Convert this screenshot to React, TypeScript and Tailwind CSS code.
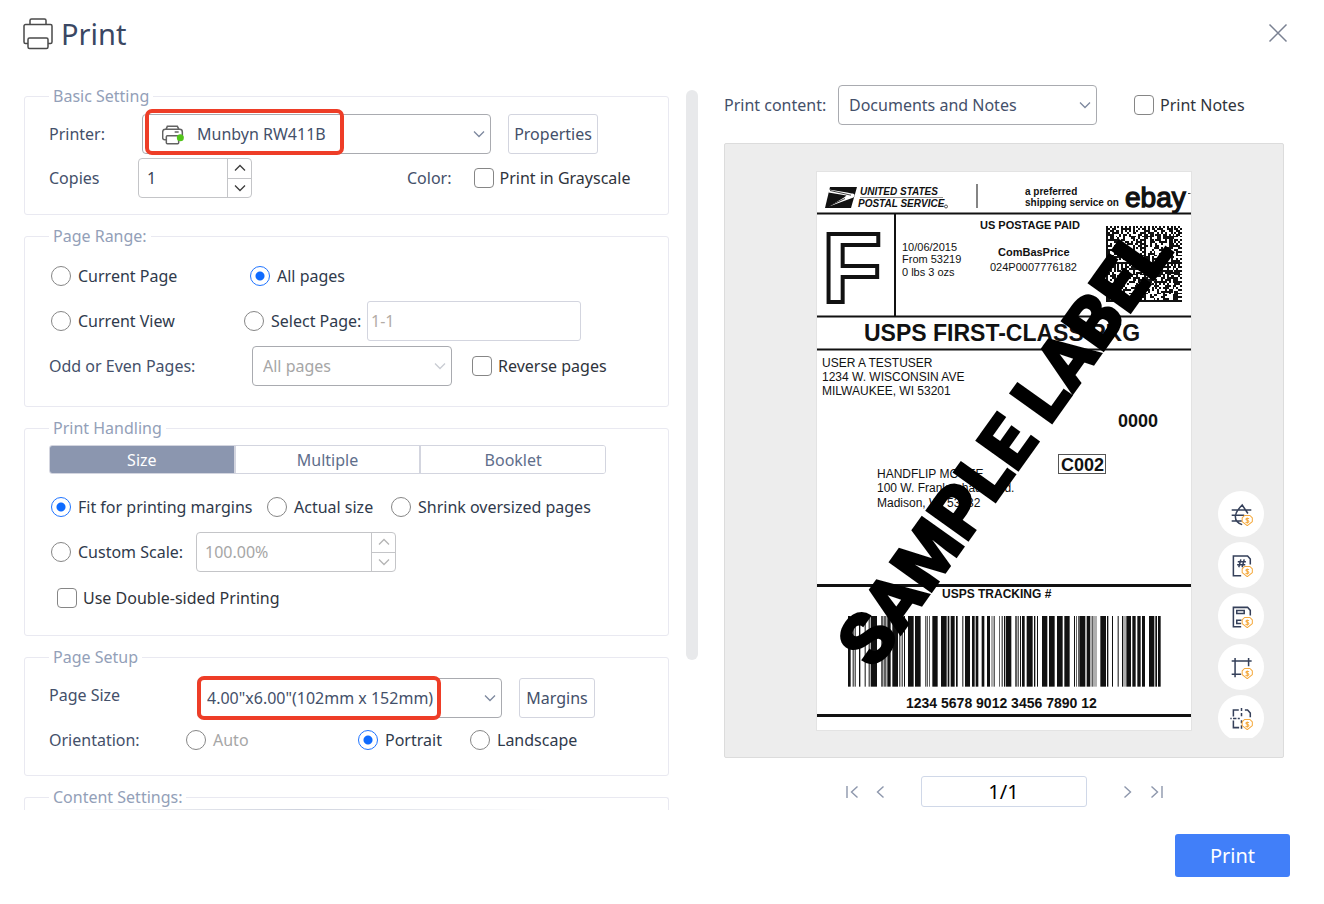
import React, { useState } from "react";
import type { ReactNode } from "react";

const BARS: [number, number][] = [
  [114, 8], [128, 3], [134, 3], [147, 4], [164, 3], [176, 3], [182, 19], [214, 4], [221, 3], [226, 3], [232, 10],
  [247, 17], [268, 3], [275, 3], [282, 3], [294, 17], [315, 17], [346, 3], [352, 2], [358, 2], [367, 16], [393, 17],
  [413, 5], [422, 12], [438, 5], [457, 3], [465, 15], [486, 8], [497, 8], [515, 8], [531, 9], [545, 2], [551, 3],
  [567, 2], [575, 3], [582, 3], [587, 17], [616, 4], [623, 3], [630, 3], [636, 8], [650, 18], [672, 4], [681, 3],
  [696, 16], [717, 17], [741, 17], [763, 16], [792, 3], [799, 2], [804, 2], [808, 18], [830, 11], [845, 3],
  [851, 2], [857, 2], [871, 17], [891, 4], [906, 3], [923, 3], [936, 4], [944, 2], [949, 14], [967, 10],
  [982, 10], [996, 9], [1017, 16], [1036, 5], [1044, 8],
];

const MATRIX_SIZE = 40;

function matrixPath(): string {
  let seed = 53219;
  let d = "";
  for (let y = 0; y < MATRIX_SIZE; y++) {
    for (let x = 0; x < MATRIX_SIZE; x++) {
      seed = (seed * 1103515245 + 12345) % 2147483648;
      const qx = x % 20;
      const qy = y % 20;
      let on = seed / 2147483648 > 0.46;
      if (qy === 0) on = x % 2 === 0;
      if (qx === 19) on = y % 2 === 1;
      if (qx === 0 || qy === 19) on = true;
      if (on) d += `M${x} ${y}h1v1h-1z`;
    }
  }
  return d;
}

function Chevron({ dir, className }: { dir: "up" | "down"; className: string }) {
  return (
    <svg viewBox="0 0 12 8" fill="none" stroke="currentColor" className={className} aria-hidden="true">
      <path d={dir === "down" ? "M1 1.5 6 6.5 11 1.5" : "M1 6.5 6 1.5 11 6.5"} strokeWidth="1.3" />
    </svg>
  );
}

function Group({ title, className, children }: { title: string; className: string; children?: ReactNode }) {
  return (
    <fieldset className={`min-w-0 rounded-[3px] border border-[#e9e9f1] px-6 ${className}`}>
      <legend className="px-1 leading-6 text-[#93a0b8]">{title}</legend>
      {children}
    </fieldset>
  );
}

function Radio({
  name,
  label,
  checked,
  disabled,
  onSelect,
}: {
  name: string;
  label: string;
  checked: boolean;
  disabled?: boolean;
  onSelect: () => void;
}) {
  return (
    <label className={`flex items-center gap-[7px] whitespace-nowrap ${disabled ? "text-[#a6a6a6]" : "text-[#2f3a4c]"}`}>
      <input
        type="radio"
        name={name}
        checked={checked}
        disabled={disabled}
        onChange={onSelect}
        className="size-5 shrink-0 appearance-none rounded-full border border-[#868686] bg-white checked:border-[#1f74ff] checked:bg-[radial-gradient(circle,#0f6bff_4px,transparent_5px)]"
      />
      {label}
    </label>
  );
}

function Check({ label }: { label: string }) {
  return (
    <label className="flex items-center gap-1.5 whitespace-nowrap text-[#2f343c]">
      <input
        type="checkbox"
        className="size-5 shrink-0 appearance-none rounded-[4px] border border-[#868686] bg-white checked:bg-[#1f74ff]"
      />
      {label}
    </label>
  );
}

function Drop({
  id,
  options,
  className,
  pad,
  disabled,
  children,
}: {
  id: string;
  options: string[];
  className: string;
  pad: string;
  disabled?: boolean;
  children?: ReactNode;
}) {
  return (
    <div className={`relative h-10 shrink-0 ${className}`}>
      <select
        id={id}
        disabled={disabled}
        className={`size-full appearance-none rounded-[4px] border border-[#a9abb0] bg-white pr-8 ${pad} ${disabled ? "text-[#a6a6a6] opacity-100" : "text-[#44506a]"}`}
      >
        {options.map((o) => (
          <option key={o}>{o}</option>
        ))}
      </select>
      <Chevron
        dir="down"
        className={`pointer-events-none absolute top-4 right-1.5 h-2 w-3 ${disabled ? "text-[#c9ccd3]" : "text-[#7d889e]"}`}
      />
      {children}
    </div>
  );
}

function Stepper({ label, id, value, className, disabled }: { label?: string; id?: string; value: string; className: string; disabled?: boolean }) {
  const tone = disabled ? "text-[#b4b4b4]" : "text-[#3c3c3c]";
  return (
    <div className={`flex h-10 shrink-0 overflow-hidden rounded-[4px] border border-[#c4c5c8] bg-white ${className}`}>
      <input
        id={id}
        aria-label={label}
        defaultValue={value}
        disabled={disabled}
        className={`min-w-0 flex-1 px-2 ${disabled ? "text-[#a6a6a6]" : "text-[#3a4456]"}`}
      />
      <div className={`flex w-6 flex-col border-l border-[#c4c5c8] ${tone}`}>
        <button type="button" aria-label="Increase" disabled={disabled} className="flex flex-1 items-center justify-center border-b border-[#c4c5c8]">
          <Chevron dir="up" className="h-2 w-3" />
        </button>
        <button type="button" aria-label="Decrease" disabled={disabled} className="flex flex-1 items-center justify-center">
          <Chevron dir="down" className="h-2 w-3" />
        </button>
      </div>
    </div>
  );
}

function ShippingLabel() {
  return (
    <svg
      viewBox="0 0 374 558"
      className="w-[374px] max-w-full bg-white outline outline-[#e3e3e3]"
      fontFamily="'Liberation Sans', Arial, sans-serif"
      fill="#111"
      role="img"
      aria-label="Shipping label preview"
    >
      <g>
        <path d="M13 15H40L34 36H8z" />
        <path d="M12 17.500 30 20.500 34.500 21.500C37.500 21.500 38.500 23 36.500 25.500L12 34.500 27 25.500 29.500 23.500 11.500 20.500z" fill="#fff" />
        <path d="M13 18.500 30 22.300 34 23.200M28 26.500 10 35" fill="none" stroke="#111" strokeWidth="0.800" />
      </g>
      <g fontWeight="700" fontStyle="italic">
        <text x="43" y="23" fontSize="10">UNITED STATES</text>
        <text x="41" y="35" fontSize="10">POSTAL SERVICE</text>
      </g>
      <circle cx="129" cy="34.500" r="1.500" fill="none" stroke="#111" strokeWidth="0.700" />
      <path d="M43 25.500H126" stroke="#777" strokeWidth="0.800" />
      <path d="M160 12V36" stroke="#333" strokeWidth="1.200" />
      <g fontWeight="700" fontSize="10">
        <text x="208" y="23">a preferred</text>
        <text x="208" y="34">shipping service on</text>
      </g>
      <text x="308" y="35" fontSize="28" stroke="#111" strokeWidth="1.300">ebay</text>
      <path d="M371 21.500h2.500" stroke="#444" />
      <path d="M0 41.500H374M0 144.500H374M0 177.500H374M78 41V145" stroke="#111" strokeWidth="2" />
      <text x="5" y="130" fontSize="98" fontWeight="700" fill="#fff" stroke="#111" strokeWidth="4">F</text>
      <g fontSize="11">
        <text x="85" y="79">10/06/2015</text>
        <text x="85" y="91">From 53219</text>
        <text x="85" y="104">0 lbs 3 ozs</text>
        <text x="173" y="99">024P0007776182</text>
      </g>
      <g fontSize="11" fontWeight="700">
        <text x="163" y="57">US POSTAGE PAID</text>
        <text x="181" y="84">ComBasPrice</text>
      </g>
      <g transform="translate(289 54) scale(1.9)">
        <path d={matrixPath()} shapeRendering="crispEdges" />
      </g>
      <text x="47" y="169" fontSize="23" fontWeight="700">USPS FIRST-CLASS PKG</text>
      <g fontSize="12">
        <text x="5" y="195">USER A TESTUSER</text>
        <text x="5" y="209">1234 W. WISCONSIN AVE</text>
        <text x="5" y="223">MILWAUKEE, WI 53201</text>
        <text x="60" y="306">HANDFLIP MCGEE</text>
        <text x="60" y="320">100 W. Frankenhauer Rd.</text>
        <text x="60" y="335">Madison, WI 53232</text>
      </g>
      <g fontSize="18" fontWeight="700">
        <text x="301" y="255">0000</text>
        <text x="244" y="299">C002</text>
      </g>
      <rect x="241.500" y="282.500" width="47" height="19" fill="none" stroke="#555" />
      <path d="M0 413.500H374M0 543.500H374" stroke="#111" strokeWidth="3" />
      <text x="125" y="426" fontSize="12" fontWeight="700">USPS TRACKING #</text>
      <g transform="translate(-7 444) scale(0.33333)">
        {BARS.map(([x, w]) => (
          <rect key={x} x={x} y="0" width={w} height="212" />
        ))}
      </g>
      <text x="89" y="536" fontSize="14" fontWeight="700">1234 5678 9012 3456 7890 12</text>
      <text
        transform="translate(187 270) rotate(-54.5)"
        x="-4"
        y="28"
        textAnchor="middle"
        fontFamily="Roboto, 'Liberation Sans', sans-serif"
        fontSize="72"
        fontWeight="900"
        fill="#000"
        stroke="#000"
        strokeWidth="2"
      >
        SAMPLE LABEL
      </text>
    </svg>
  );
}

const TOOLS: { label: string; art: ReactNode }[] = [
  {
    label: "Watermark",
    art: <path d="M5 21H63M5 36H42M5 53H35M53 31 36 6C28 14 17 26 16 38 15 50 23 60 36 64" />,
  },
  {
    label: "Page number",
    art: (
      <>
        <path d="M33 64H10V6H52L60 15V31" />
        <path d="M32 16 26 39M42 16 36 39M23 23H47M21 32H45" />
      </>
    ),
  },
  {
    label: "Header and footer",
    art: <path d="M33 64H10V7H52L60 16V31M20 16H42V25H20ZM34 45H20V55H33" />,
  },
  {
    label: "Crop",
    art: <path d="M5 15H64M15 6V63M5 54H33M55 6V30" />,
  },
  {
    label: "Split pages",
    art: <path d="M26 9H10V28M10 40V61H27M1 34H5M9 34H19M23 34H29M34 3V12M34 18V27M34 39V48M34 54V64M44 9H52L60 18V30" />,
  },
];

function ToolIcon({ children }: { children: ReactNode }) {
  return (
    <svg viewBox="0 0 68 68" className="size-[23px]" fill="none" stroke="#35405a" strokeWidth="4.5" aria-hidden="true">
      {children}
      <g stroke="#f5a93c" strokeWidth="3" strokeLinejoin="round">
        <path d="M43 37H59L66 44V55L51 67 36 55V44Z" fill="#fff" />
        <path d="M56 47C54 44 47 44 47 48 47 52 56 50 56 55 56 59 48 59 46 56M51 43V61" />
      </g>
    </svg>
  );
}

export default function App() {
  const [range, setRange] = useState("All pages");
  const [fit, setFit] = useState("Fit for printing margins");
  const [orientation, setOrientation] = useState("Portrait");
  const [tab, setTab] = useState("Size");

  return (
    <div className="bg-white pb-6 font-['Noto_Sans','Open_Sans',sans-serif] text-base text-[#44506a]">
      <header className="flex h-[84px] items-start justify-between pt-3 pr-9 pl-[23px]">
        <div className="flex items-center gap-2">
          <svg viewBox="0 0 30 32" className="h-8 w-[30px]" fill="none" stroke="#4a4a4a" strokeWidth="1.5" aria-hidden="true">
            <path d="M7 6.500V2.500A1.500 1.500 0 0 1 8.500 1H21.500A1.500 1.500 0 0 1 23 2.500V6.500" />
            <path d="M5 25.500H2.500A1.500 1.500 0 0 1 1 24V8A1.500 1.500 0 0 1 2.500 6.500H27.500A1.500 1.500 0 0 1 29 8V24A1.500 1.500 0 0 1 27.500 25.500H25" />
            <rect x="5" y="20" width="20" height="10.500" rx="1.500" />
          </svg>
          <h1 className="text-[29px] leading-[44px] text-[#3a4763]">Print</h1>
        </div>
        <button type="button" aria-label="Close" className="mt-[11px] text-[#7a8192]">
          <svg viewBox="0 0 20 20" className="size-5" fill="none" stroke="currentColor" strokeWidth="1.5" aria-hidden="true">
            <path d="M1.500 1.500 18.500 18.500M18.500 1.500 1.500 18.500" />
          </svg>
        </button>
      </header>

      <main className="grid grid-cols-[minmax(0,674fr)_minmax(0,560fr)] gap-[26px] pr-10 pl-6">
        <div className="flex items-start gap-[17px]">
          <form className="flex min-w-0 flex-1 flex-col gap-[9px]">
            <Group title="Basic Setting" className="pb-4">
              <div className="mt-1.5 flex items-center">
                <label htmlFor="printer" className="w-[93px]">Printer:</label>
                <Drop id="printer" options={["Munbyn RW411B"]} className="w-[349px]" pad="pl-[54px]">
                  <svg viewBox="0 0 66 60" className="pointer-events-none absolute top-[11px] left-5 h-5 w-[22px]" fill="none" stroke="#626262" strokeWidth="4.5" aria-hidden="true">
                    <path d="M12 13 16 4H46L51 13M14 44H8Q2 44 2 38V21Q2 13 10 13H53Q61 13 61 21V38" />
                    <rect x="13" y="32" width="37" height="24" rx="3" />
                    <path d="M38 21H50" />
                    <circle cx="55" cy="38" r="10.500" fill="#52c41a" stroke="none" />
                  </svg>
                  <span className="pointer-events-none absolute -top-[5px] left-[3px] h-[46px] w-[199px] rounded-[7px] border-4 border-[#ee3d27]" />
                </Drop>
                <button type="button" className="ml-[17px] h-10 w-[90px] rounded-[3px] border border-[#d3d5df]">Properties</button>
              </div>
              <div className="mt-1 flex items-center">
                <label htmlFor="copies" className="w-[89px]">Copies</label>
                <Stepper id="copies" value="1" className="w-[114px]" />
                <span className="mr-[22px] ml-[155px]">Color:</span>
                <Check label="Print in Grayscale" />
              </div>
            </Group>

            <Group title="Page Range:" className="pb-5">
              <div className="mt-2 flex h-10 items-center pl-0.5">
                <div className="w-[199px]">
                  <Radio name="range" label="Current Page" checked={range === "Current Page"} onSelect={() => setRange("Current Page")} />
                </div>
                <Radio name="range" label="All pages" checked={range === "All pages"} onSelect={() => setRange("All pages")} />
              </div>
              <div className="mt-[5px] flex h-10 items-center pl-0.5">
                <div className="w-[193px]">
                  <Radio name="range" label="Current View" checked={range === "Current View"} onSelect={() => setRange("Current View")} />
                </div>
                <div className="w-[123px]">
                  <Radio name="range" label="Select Page:" checked={range === "Select Page"} onSelect={() => setRange("Select Page")} />
                </div>
                <input aria-label="Pages to print" placeholder="1-1" className="h-10 w-[214px] rounded-[3px] border border-[#d3d5df] px-[3px] placeholder:text-[#b3aca6]" />
              </div>
              <div className="mt-[5px] flex items-center">
                <label htmlFor="parity" className="w-[203px]">Odd or Even Pages:</label>
                <Drop id="parity" options={["All pages"]} className="mr-5 w-[200px]" pad="pl-2.5" disabled />
                <Check label="Reverse pages" />
              </div>
            </Group>

            <Group title="Print Handling" className="pb-[17px]">
              <div role="tablist" className="mt-[5px] mr-[38px] flex h-[29px] overflow-hidden rounded-[3px] border border-[#d3d5df]">
                {["Size", "Multiple", "Booklet"].map((t) => (
                  <button
                    key={t}
                    type="button"
                    role="tab"
                    aria-selected={tab === t}
                    onClick={() => setTab(t)}
                    className={`flex-1 border-r-2 border-[#d3d5df] leading-7 last:border-r-0 ${tab === t ? "bg-[#8b96af] text-white" : "bg-white text-[#606e8b]"}`}
                  >
                    {t}
                  </button>
                ))}
              </div>
              <div className="mt-[13px] flex h-10 items-center pl-0.5">
                <div className="w-[216px]">
                  <Radio name="fit" label="Fit for printing margins" checked={fit === "Fit for printing margins"} onSelect={() => setFit("Fit for printing margins")} />
                </div>
                <div className="w-[124px]">
                  <Radio name="fit" label="Actual size" checked={fit === "Actual size"} onSelect={() => setFit("Actual size")} />
                </div>
                <Radio name="fit" label="Shrink oversized pages" checked={fit === "Shrink"} onSelect={() => setFit("Shrink")} />
              </div>
              <div className="mt-[5px] flex h-10 items-center pl-0.5">
                <div className="w-[145px]">
                  <Radio name="fit" label="Custom Scale:" checked={fit === "Custom"} onSelect={() => setFit("Custom")} />
                </div>
                <Stepper label="Scale percentage" value="100.00%" className="w-[200px]" disabled />
              </div>
              <div className="mt-1.5 flex h-10 items-center pl-2">
                <Check label="Use Double-sided Printing" />
              </div>
            </Group>

            <Group title="Page Setup" className="pb-[15px]">
              <div className="mt-[9px] flex items-center">
                <label htmlFor="size" className="w-[148px] pb-1.5">Page Size</label>
                <Drop id="size" options={['4.00"x6.00"(102mm x 152mm)']} className="w-[305px]" pad="pl-[9px]">
                  <span className="pointer-events-none absolute -top-0.5 left-0 h-[44px] w-[244px] rounded-[7px] border-4 border-[#ee3d27]" />
                </Drop>
                <button type="button" className="ml-[17px] h-10 w-[76px] rounded-[3px] border border-[#d3d5df]">Margins</button>
              </div>
              <div className="mt-0.5 flex h-10 items-center">
                <span className="w-[137px]">Orientation:</span>
                <div className="w-[172px]">
                  <Radio name="orientation" label="Auto" checked={false} disabled onSelect={() => setOrientation("Auto")} />
                </div>
                <div className="w-[112px]">
                  <Radio name="orientation" label="Portrait" checked={orientation === "Portrait"} onSelect={() => setOrientation("Portrait")} />
                </div>
                <Radio name="orientation" label="Landscape" checked={orientation === "Landscape"} onSelect={() => setOrientation("Landscape")} />
              </div>
            </Group>

            <Group title="Content Settings:" className="rounded-b-none border-b-0">
              <div className="mr-24 h-px bg-linear-to-r from-transparent via-[#cfd3de] to-transparent" />
            </Group>
          </form>
          <div className="mt-1.5 h-[570px] w-3 shrink-0 rounded-full bg-[#e8e9eb]" />
        </div>

        <section>
          <div className="flex items-center pt-px">
            <label htmlFor="content" className="w-[114px] whitespace-nowrap">Print content:</label>
            <Drop id="content" options={["Documents and Notes"]} className="mr-[37px] w-[259px]" pad="pl-2.5" />
            <Check label="Print Notes" />
          </div>

          <div className="relative mt-[18px] flex justify-center rounded-[2px] border border-[#dcdcdc] bg-[#ededed] px-6 pt-7 pb-[27px]">
            <ShippingLabel />
            <div className="absolute right-[19px] bottom-[19px] flex h-[247px] flex-col gap-[5px] overflow-hidden">
              {TOOLS.map((t) => (
                <button key={t.label} type="button" aria-label={t.label} className="flex size-[46px] shrink-0 items-center justify-center rounded-full bg-white">
                  <ToolIcon>{t.art}</ToolIcon>
                </button>
              ))}
            </div>
          </div>

          <nav aria-label="Preview pages" className="mt-[18px] flex items-center justify-center text-[#8d97ac]">
            <button type="button" aria-label="First page" className="mr-[17px]">
              <svg viewBox="0 0 13 14" className="h-3.5 w-[13px]" fill="none" stroke="currentColor" strokeWidth="1.4" aria-hidden="true">
                <path d="M1 1V13M11.500 1.500 5.500 7 11.500 12.500" />
              </svg>
            </button>
            <button type="button" aria-label="Previous page" className="mr-9">
              <svg viewBox="0 0 9 14" className="h-3.5 w-[9px]" fill="none" stroke="currentColor" strokeWidth="1.4" aria-hidden="true">
                <path d="M7.500 1.500 1.500 7 7.500 12.500" />
              </svg>
            </button>
            <input aria-label="Page" defaultValue="1/1" className="h-[31px] w-[166px] rounded-[3px] border border-[#d0d8e8] text-center text-xl text-black" />
            <button type="button" aria-label="Next page" className="ml-9">
              <svg viewBox="0 0 9 14" className="h-3.5 w-[9px]" fill="none" stroke="currentColor" strokeWidth="1.4" aria-hidden="true">
                <path d="M1.500 1.500 7.500 7 1.500 12.500" />
              </svg>
            </button>
            <button type="button" aria-label="Last page" className="ml-[18px]">
              <svg viewBox="0 0 13 14" className="h-3.5 w-[13px]" fill="none" stroke="currentColor" strokeWidth="1.4" aria-hidden="true">
                <path d="M12 1V13M1.500 1.500 7.500 7 1.500 12.500" />
              </svg>
            </button>
          </nav>
        </section>
      </main>

      <footer className="mt-6 flex justify-end pr-[34px]">
        <button type="button" className="h-[43px] w-[115px] rounded-[3px] bg-[#417ff9] text-xl text-white">Print</button>
      </footer>
    </div>
  );
}
